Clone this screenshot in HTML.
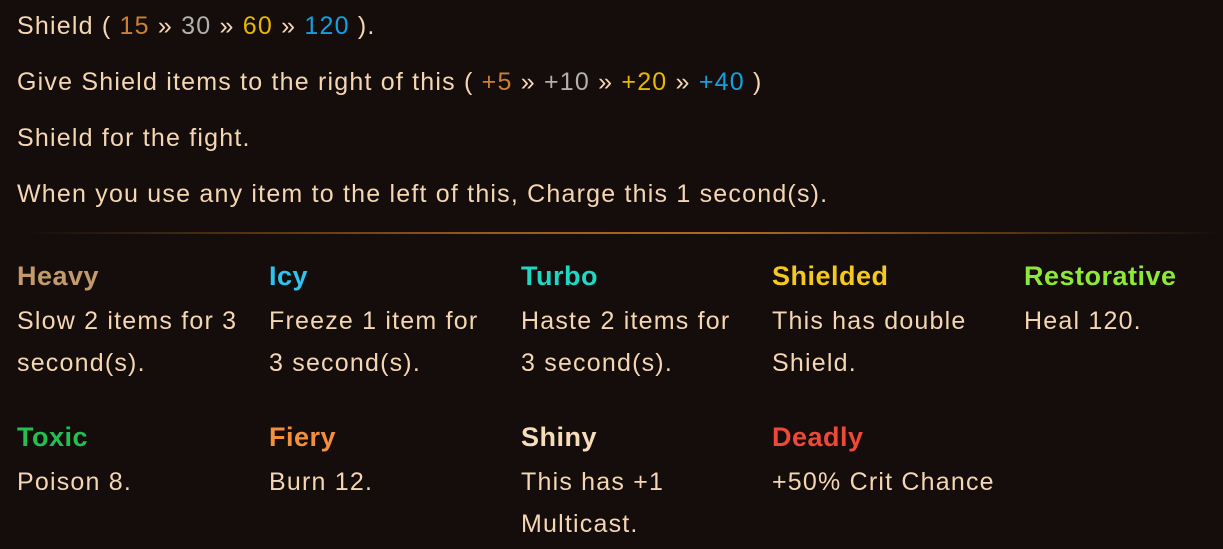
<!DOCTYPE html>
<html><head><meta charset="utf-8"><style>
body{margin:0;width:1223px;height:549px;background:#140d0c;overflow:hidden;font-family:"Liberation Sans",sans-serif;color:#f5d6b2;font-size:25px;letter-spacing:1.2px}
.l{position:absolute;left:17px;white-space:nowrap;line-height:28px}
.hr{position:absolute;left:0;top:232px;width:1223px;height:2px;background:linear-gradient(90deg,rgba(160,90,20,0) 2%,#9a5a18 40%,#b06a1c 60%,rgba(160,90,20,0) 100%)}
.c{position:absolute;width:250px;line-height:42px;white-space:nowrap}
.t{font-weight:bold;font-size:27px;letter-spacing:0.5px;line-height:28px;margin-bottom:10px}
.b{color:#cd7f32}.s{color:#b0b0b0}.g{color:#e8b800}.d{color:#14a0e0}
</style></head><body>
<div class="l" style="top:12px">Shield ( <span class="b">15</span> » <span class="s">30</span> » <span class="g">60</span> » <span class="d">120</span> ).</div>
<div class="l" style="top:68px">Give Shield items to the right of this ( <span class="b">+5</span> » <span class="s">+10</span> » <span class="g">+20</span> » <span class="d">+40</span> )</div>
<div class="l" style="top:124px">Shield for the fight.</div>
<div class="l" style="top:180px">When you use any item to the left of this, Charge this 1 second(s).</div>
<div class="hr"></div>
<div class="c" style="left:17px;top:262px"><div class="t" style="color:#c29a6c">Heavy</div>Slow 2 items for 3<br>second(s).</div>
<div class="c" style="left:269px;top:262px"><div class="t" style="color:#2ec4f0">Icy</div>Freeze 1 item for<br>3 second(s).</div>
<div class="c" style="left:521px;top:262px"><div class="t" style="color:#1ed8c4">Turbo</div>Haste 2 items for<br>3 second(s).</div>
<div class="c" style="left:772px;top:262px"><div class="t" style="color:#f4c81c">Shielded</div>This has double<br>Shield.</div>
<div class="c" style="left:1024px;top:262px;width:199px"><div class="t" style="color:#8ee83a">Restorative</div>Heal 120.</div>
<div class="c" style="left:17px;top:423px"><div class="t" style="color:#22c050">Toxic</div>Poison 8.</div>
<div class="c" style="left:269px;top:423px"><div class="t" style="color:#f4903c">Fiery</div>Burn 12.</div>
<div class="c" style="left:521px;top:423px"><div class="t" style="color:#f6dcb8">Shiny</div>This has +1<br>Multicast.</div>
<div class="c" style="left:772px;top:423px"><div class="t" style="color:#f04838">Deadly</div>+50% Crit Chance</div>
</body></html>
